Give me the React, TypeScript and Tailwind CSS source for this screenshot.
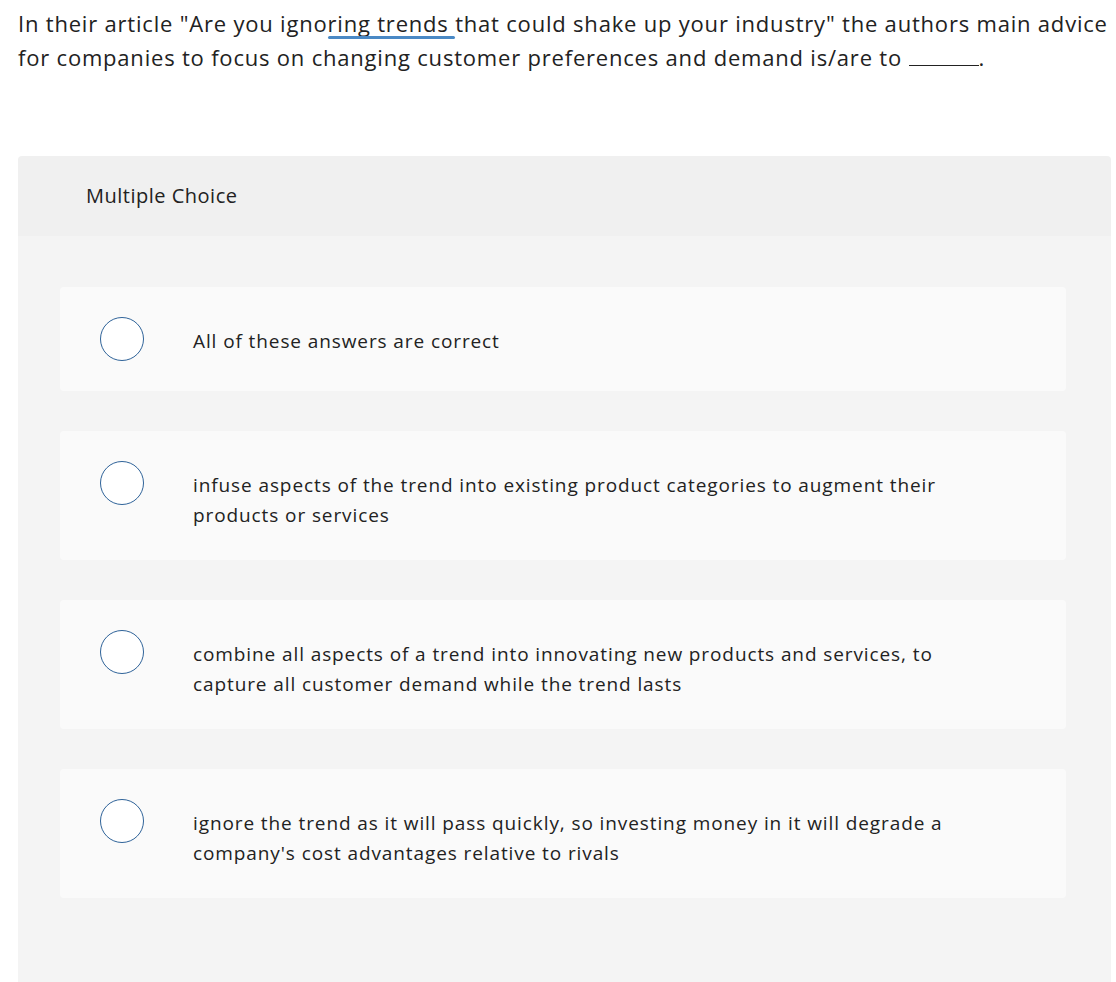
const options = [
    'All of these answers are correct',
    'infuse aspects of the trend into existing product categories to augment their products or services',
    'combine all aspects of a trend into innovating new products and services, to capture all customer demand while the trend lasts',
    "ignore the trend as it will pass quickly, so investing money in it will degrade a company's cost advantages relative to rivals",
];

export default function App() {
    return (
        <div
            className="min-h-screen bg-white text-[#222222]"
            style={{ fontFamily: '"Open Sans", "Liberation Sans", sans-serif' }}
        >
            {/* Question */}
            <div className="pl-[18px] pt-[6px] text-[22px] tracking-[0.8px] leading-[34px] whitespace-nowrap">
                <p>
                    In their article "Are you igno
                    <span className="relative">
                        ring trends{' '}
                        <span className="absolute left-0 right-0 -bottom-[1px] h-[3px] rounded-full bg-[#4a89c5]" />
                    </span>
                    that could shake up your industry" the authors main advice
                </p>
                <p>
                    for companies to focus on changing customer preferences and demand is/are to{' '}
                    <span className="inline-block w-[70px] border-b border-[#222222] align-baseline" />.
                </p>
            </div>

            {/* Card */}
            <div className="ml-[18px] mr-[5px] mt-[82px] rounded-t-[4px] overflow-hidden">
                <div className="h-[80px] bg-[#f0f0f0] flex items-center pl-[68px] text-[20px] tracking-[0.5px]">
                    Multiple Choice
                </div>
                <div className="bg-[#f4f4f4] pt-[51px] pb-[90px] pl-[42px] pr-[45px] flex flex-col gap-[40px]">
                    {options.map((opt, i) => (
                        <div key={i} className="bg-[#fafafa] rounded-[4px] flex items-start pl-[40px] pr-[60px] pt-[30px] pb-[30px]">
                            <div className="w-[44px] h-[44px] shrink-0 rounded-full border border-[#2f6399] bg-white" />
                            <div className="ml-[49px] mt-[9px] text-[19px] tracking-[0.9px] leading-[30px] max-w-[760px]">{opt}</div>
                        </div>
                    ))}
                </div>
            </div>
        </div>
    );
}
